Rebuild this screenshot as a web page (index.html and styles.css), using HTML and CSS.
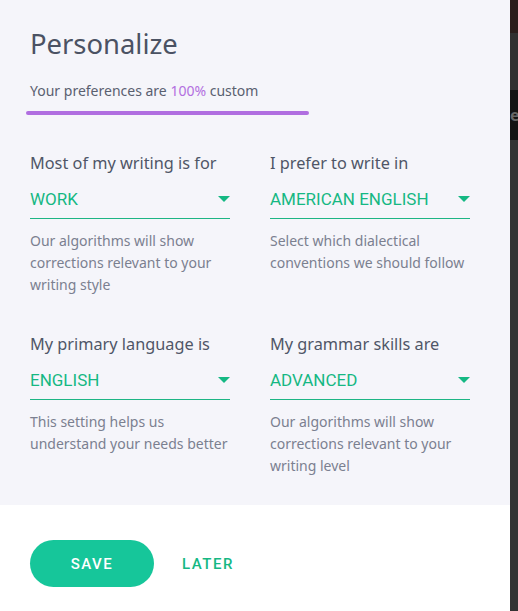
FILE: index.html
```html
<!DOCTYPE html>
<html lang="en">
<head>
    <meta charset="UTF-8">
    <meta name="viewport" content="width=device-width, initial-scale=1.0">
    <title>Personalize</title>
    <link rel="stylesheet" href="styles.css">
</head>
<body>
    <div class="page">
        <div class="panel">
            <div class="prefs">
                <h2 class="title">Personalize</h2>
                <p class="score">Your preferences are <span class="pct">100%</span> custom</p>
                <div class="score-bar"></div>

                <div class="grid">
                    <div class="field">
                        <div class="label">Most of my writing is for</div>
                        <div class="select">
                            <span>WORK</span>
                            <span class="caret"></span>
                        </div>
                        <p class="hint">Our algorithms will show corrections relevant to your writing style</p>
                    </div>
                    <div class="field">
                        <div class="label">I prefer to write in</div>
                        <div class="select">
                            <span>AMERICAN ENGLISH</span>
                            <span class="caret"></span>
                        </div>
                        <p class="hint">Select which dialectical conventions we should follow</p>
                    </div>
                    <div class="field">
                        <div class="label">My primary language is</div>
                        <div class="select">
                            <span>ENGLISH</span>
                            <span class="caret"></span>
                        </div>
                        <p class="hint">This setting helps us understand your needs better</p>
                    </div>
                    <div class="field">
                        <div class="label">My grammar skills are</div>
                        <div class="select">
                            <span>ADVANCED</span>
                            <span class="caret"></span>
                        </div>
                        <p class="hint">Our algorithms will show corrections relevant to your writing level</p>
                    </div>
                </div>
            </div>
            <div class="actions">
                <button class="btn-save">SAVE</button>
                <button class="btn-later">LATER</button>
            </div>
        </div>
        <div class="backdrop">
            <div class="bd-top"></div>
            <div class="bd-mid"></div>
            <div class="bd-dark">e</div>
            <div class="bd-rest"></div>
        </div>
    </div>
</body>
</html>
```

FILE: styles.css
```css
body {
    margin: 0;
    font-family: "Noto Sans", "Open Sans", sans-serif;
    background-color: #333333;
}

.page {
    display: flex;
    height: 611px;
    overflow: hidden;
}

.panel {
    width: 510px;
    display: flex;
    flex-direction: column;
    background-color: #ffffff;
}

.prefs {
    box-sizing: border-box;
    height: 505px;
    padding: 25px 30px 0 30px;
    background-color: #f5f5fa;
}

.title {
    margin: 0;
    font-size: 27.4px;
    font-weight: 400;
    line-height: 38px;
    color: #4b5263;
}

.score {
    margin: 18px 0 0 0;
    font-size: 14px;
    line-height: 20px;
    color: #5a6070;
}

.score .pct {
    color: #b26fe0;
}

.score-bar {
    width: 283px;
    height: 4px;
    margin: 10px 0 0 -4px;
    border-radius: 2px;
    background-color: #b06ee0;
}

.grid {
    display: grid;
    grid-template-columns: 200px 200px;
    column-gap: 40px;
    row-gap: 36px;
    margin-top: 36px;
}

.label {
    font-size: 16.3px;
    line-height: 24px;
    color: #4f5667;
}

.select {
    display: flex;
    justify-content: space-between;
    align-items: center;
    height: 38px;
    margin-top: 5px;
    border-bottom: 1px solid #1db584;
    font-family: Roboto, sans-serif;
    font-size: 17px;
    color: #15b883;
}

.caret {
    width: 0;
    height: 0;
    border-left: 6px solid transparent;
    border-right: 6px solid transparent;
    border-top: 6px solid #15b883;
}

.hint {
    margin: 11px 0 0 0;
    font-size: 14px;
    line-height: 22px;
    color: #7b8090;
}

.actions {
    display: flex;
    align-items: center;
    gap: 28px;
    padding: 35px 30px 0 30px;
}

.actions button {
    font-family: Roboto, sans-serif;
    font-size: 15px;
    font-weight: 500;
    letter-spacing: 1.5px;
    border: none;
    cursor: pointer;
}

.btn-save {
    width: 124px;
    height: 47px;
    border-radius: 24px;
    background-color: #16c69a;
    color: #ffffff;
}

.btn-later {
    background: none;
    padding: 0;
    color: #15b883;
}

.backdrop {
    width: 8px;
    display: flex;
    flex-direction: column;
}

.bd-top {
    height: 33px;
    background-color: #2a1d1b;
}

.bd-mid {
    height: 57px;
    background-color: #303030;
}

.bd-dark {
    height: 50px;
    background-color: #131313;
    color: #666666;
    font-size: 16px;
    font-weight: 700;
    line-height: 50px;
    overflow: hidden;
    white-space: nowrap;
}

.bd-rest {
    flex: 1;
    background-color: #333333;
}
```
